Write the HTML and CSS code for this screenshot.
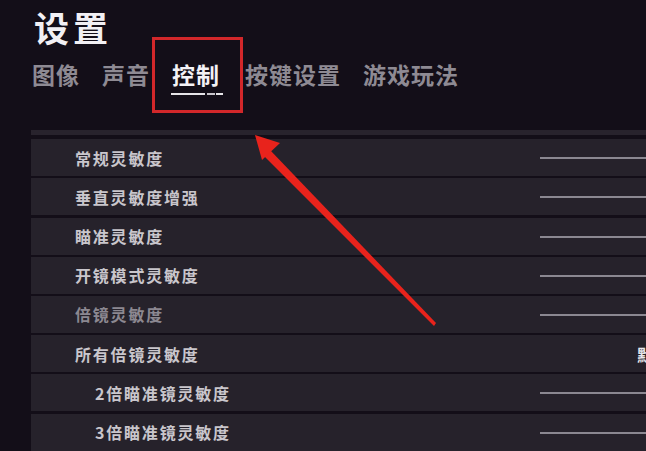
FILE: index.html
```html
<!DOCTYPE html>
<html>
<head>
  <meta charset="UTF-8">
  <link rel="stylesheet" href="styles.css">
  <title>设置</title>
</head>
<body>
  <div class="page">
    <h1 class="title">设置</h1>
    <div class="tabs">
      <span class="tab">图像</span>
      <span class="tab">声音</span>
      <span class="tab tab-active">控制<span class="tab-line"></span></span>
      <span class="tab">按键设置</span>
      <span class="tab">游戏玩法</span>
    </div>
    <div class="highlight"></div>

    <div class="list">
      <div class="list-top"></div>
      <div class="row"><span class="label">常规灵敏度</span><span class="slider"></span></div>
      <div class="row"><span class="label">垂直灵敏度增强</span><span class="slider"></span></div>
      <div class="row"><span class="label">瞄准灵敏度</span><span class="slider"></span></div>
      <div class="row"><span class="label">开镜模式灵敏度</span><span class="slider"></span></div>
      <div class="row row-dim"><span class="label">倍镜灵敏度</span><span class="slider"></span></div>
      <div class="row"><span class="label">所有倍镜灵敏度</span><span class="value">默认</span></div>
      <div class="row row-sub"><span class="label">2倍瞄准镜灵敏度</span><span class="slider"></span></div>
      <div class="row row-sub"><span class="label">3倍瞄准镜灵敏度</span><span class="slider"></span></div>
    </div>

    <svg class="arrow" width="646" height="451" viewBox="0 0 646 451">
      <polygon points="434,326 436,323 270,150 264,156" fill="#e8231c"/>
      <polygon points="255,135 280,143 262,160" fill="#e8231c"/>
    </svg>
  </div>
</body>
</html>
```

FILE: styles.css
```css
* {
  box-sizing: border-box;
}

body {
  margin: 0;
  background: #130e18;
  font-family: "Noto Sans CJK SC", "Noto Sans", sans-serif;
  overflow: hidden;
}

.page {
  position: relative;
  width: 646px;
  height: 451px;
  overflow: hidden;
}

.title {
  margin: 0;
  padding: 4px 0 0 34px;
  height: 52px;
  font-size: 35px;
  line-height: 46px;
  font-weight: 700;
  color: #f2f0f4;
  letter-spacing: 4px;
}

.tabs {
  display: flex;
  gap: 22px;
  padding-left: 32px;
  height: 78px;
}

.tab {
  position: relative;
  font-size: 23px;
  line-height: 44px;
  font-weight: 700;
  color: #8e8a93;
  letter-spacing: 1px;
}

.tab-active {
  color: #f4f2f6;
  margin-right: 3px;
}

.tab-line {
  position: absolute;
  left: -1px;
  right: -3px;
  top: 41px;
  height: 2px;
  background: repeating-linear-gradient(90deg, #e6e4e8 0 34px, #130e18 34px 36px, #c9c6cc 36px 44px, #130e18 44px 45px);
}

.highlight {
  position: absolute;
  left: 152px;
  top: 37px;
  width: 91px;
  height: 76px;
  border: 3px solid #d2272a;
}

.list {
  margin-left: 31px;
  display: flex;
  flex-direction: column;
  gap: 2.2px;
}

.list-top {
  height: 5px;
  background: #28232d;
  margin-bottom: 2px;
}

.row {
  position: relative;
  display: flex;
  align-items: center;
  height: 37px;
  background: #26222b;
  padding-left: 44px;
}

.label {
  font-size: 16px;
  font-weight: 700;
  color: #c9c6cc;
  letter-spacing: 1.8px;
}

.row-dim .label {
  color: #8c8891;
}

.row-sub {
  padding-left: 64px;
}

.slider {
  position: absolute;
  left: 509px;
  right: 0;
  top: 18px;
  height: 2px;
  background: #8b8891;
}

.value {
  position: absolute;
  left: 606px;
  font-size: 16px;
  font-weight: 700;
  white-space: nowrap;
  color: #e8e6ea;
}

.arrow {
  position: absolute;
  left: 0;
  top: 0;
}
```
